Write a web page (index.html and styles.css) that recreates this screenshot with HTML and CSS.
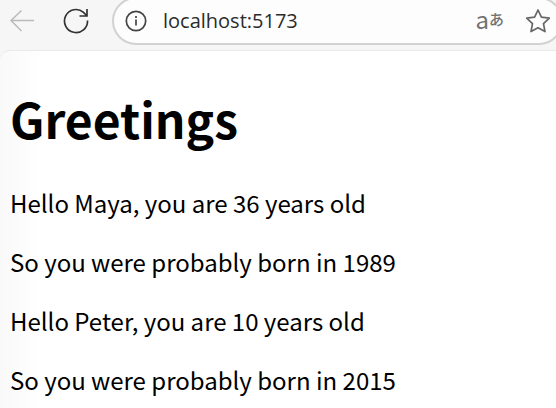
FILE: index.html
```html
<!DOCTYPE html>
<html lang="en">
<head>
<meta charset="utf-8">
<title>Greetings</title>
<link rel="stylesheet" href="styles.css">
</head>
<body>
<header class="toolbar">
  <button class="tool back" type="button" aria-label="Back" disabled>
    <svg width="26" height="24" viewBox="0 0 26 24"><path d="M25 11.500H2M12.500 1.500L2 11.500l10.500 10.500"/></svg>
  </button>
  <button class="tool reload" type="button" aria-label="Reload">
    <svg width="26" height="26" viewBox="0 0 26 26"><path d="M24.500 12.500A11.500 11.500 0 1 1 20.500 4.300L23.500 7.500M24 1v7h-7.500"/></svg>
  </button>
  <div class="address">
    <button class="tool info" type="button" aria-label="Site information">
      <svg width="22" height="22" viewBox="0 0 22 22"><circle cx="11" cy="11" r="9.700"/><path d="M11 9.500v6M11 6v2"/></svg>
    </button>
    <input class="url" type="text" aria-label="Address" value="localhost:5173">
    <button class="tool translate" type="button" aria-label="Translate"><span class="latin">a</span><span class="kana" lang="ja">あ</span></button>
    <button class="tool star" type="button" aria-label="Add to favorites">
      <svg width="26" height="26" viewBox="0 0 26 26"><path d="M13 2l3.400 7.200 7.900 1-5.800 5.500 1.500 7.900-7-3.800-7 3.800 1.500-7.900-5.800-5.500 7.900-1z"/></svg>
    </button>
  </div>
</header>
<main class="page">
  <h1>Greetings</h1>
  <p>Hello Maya, you are 36 years old</p>
  <p>So you were probably born in 1989</p>
  <p>Hello Peter, you are 10 years old</p>
  <p>So you were probably born in 2015</p>
</main>
</body>
</html>
```
FILE: styles.css
```css
* {
  box-sizing: border-box;
}

body {
  margin: 0;
  background: #f6f6f6;
  color: #000;
  overflow: hidden;
}

.toolbar {
  display: flex;
  align-items: center;
  height: 50px;
  padding: 0 0 8px 9px;
}

.tool {
  display: flex;
  align-items: center;
  flex: none;
  margin: 0;
  padding: 0;
  border: 0;
  background: none;
  color: #333;
}

.tool svg {
  display: block;
  fill: none;
  stroke: currentColor;
  stroke-width: 1.7;
}

.back {
  margin-right: 28px;
  color: #bababa;
}

.tool.back svg {
  stroke-width: 1.5;
}

.address {
  display: flex;
  flex: 1;
  align-items: center;
  min-width: 0;
  height: 48px;
  margin: 0 -7px 0 23px;
  padding: 0 23px 0 11px;
  border: 2px solid #d2d2d2;
  border-radius: 24px;
  background: #fdfdfd;
}

.info {
  color: #444;
}

.url {
  flex: 1;
  min-width: 0;
  margin: 0 0 0 16px;
  padding: 0;
  border: 0;
  outline: 0;
  background: none;
  color: #2b2b2b;
  font: 20px/28px "Open Sans", sans-serif;
}

.translate {
  margin: 0 21px 4px 0;
  color: #727272;
}

.latin {
  font: 24px/24px "Noto Sans CJK JP", sans-serif;
}

.kana {
  font: 500 15px/24px "Noto Sans CJK JP", sans-serif;
}

.star {
  margin-right: -13px;
  color: #666;
}

.tool.star svg {
  stroke-linejoin: round;
}

.page {
  min-height: calc(100vh - 50px);
  padding: 30px 10px 0;
  border-top: 1px solid #e9e9e9;
  border-radius: 10px 0 0;
  background: linear-gradient(to right, #f9f9f9, #fff 42px);
  font: 24px/34px "Noto Sans CJK SC", sans-serif;
}

h1 {
  margin: 0 0 31px;
  font-size: 48px;
  line-height: 74px;
}

p {
  margin: 0 0 25px;
}
```
